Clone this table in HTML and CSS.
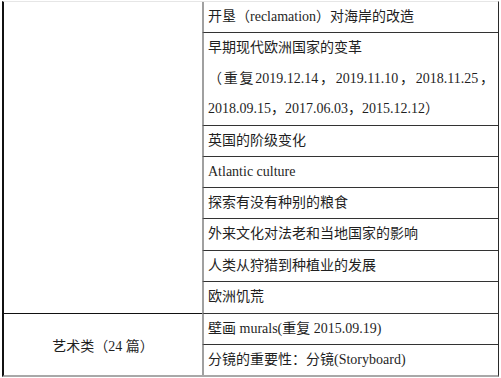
FILE: index.html
```html
<!DOCTYPE html>
<html lang="zh-CN">
<head>
<meta charset="utf-8">
<link rel="stylesheet" href="styles.css">
</head>
<body>
<div class="doc">
  <div class="cat cat-top"></div>
  <div class="item r1">开垦（reclamation）对海岸的改造</div>
  <div class="item r2">
    <div class="ln">早期现代欧洲国家的变革</div>
    <div class="ln just"><span>（</span><span>重</span><span>复</span><span>2019.12.14</span><span>，</span><span>2019.11.10</span><span>，</span><span>2018.11.25</span><span>，</span></div>
    <div class="ln">2018.09.15，2017.06.03，2015.12.12）</div>
  </div>
  <div class="item">英国的阶级变化</div>
  <div class="item">Atlantic culture</div>
  <div class="item">探索有没有种别的粮食</div>
  <div class="item">外来文化对法老和当地国家的影响</div>
  <div class="item">人类从狩猎到种植业的发展</div>
  <div class="item">欧洲饥荒</div>
  <div class="cat cat-art">艺术类（24 篇）</div>
  <div class="item">壁画 murals(重复 2015.09.19)</div>
  <div class="item last">分镜的重要性：分镜(Storyboard)</div>
</div>
</body>
</html>
```

FILE: styles.css
```css
html, body {
  margin: 0;
  padding: 0;
  background: #ffffff;
}
body {
  padding: 1px 0 0 2px;
  font-family: "Liberation Serif", "Noto Sans CJK SC", serif;
  font-size: 14px;
  color: #1f1f1f;
}
.doc {
  display: grid;
  width: 497px;
  box-sizing: border-box;
  grid-template-columns: 198px 296px;
  grid-template-rows: 31px 93px 31px 31px 31px 32px 31px 32px 31px 30px;
  border-top: 1px solid #e6e6e6;
  border-left: 2px solid #111111;
  border-right: 1px solid #2a2a2a;
  border-bottom: 2px solid #a8a8a8;
}
.cat {
  grid-column: 1;
  display: flex;
  align-items: center;
  justify-content: center;
}
.cat-top {
  grid-row: 1 / span 8;
  border-bottom: 1px solid #111111;
}
.cat-art {
  grid-row: 9 / span 2;
}
.item {
  grid-column: 2;
  box-sizing: border-box;
  border-left: 2px solid #a0a0a0;
  border-bottom: 1px solid #333333;
  padding: 0 4px;
  line-height: 30px;
  white-space: nowrap;
}
.item.last {
  border-bottom: none;
}
.r2 {
  display: flex;
  flex-direction: column;
}
.ln {
  line-height: 30.67px;
}
.just {
  display: flex;
  justify-content: space-between;
}
```
